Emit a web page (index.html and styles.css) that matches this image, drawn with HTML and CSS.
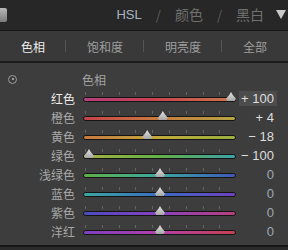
FILE: index.html
```html
<!DOCTYPE html>
<html lang="zh">
<head>
  <meta charset="UTF-8" />
  <title>HSL</title>
  <link rel="stylesheet" href="styles.css">
</head>
<body>
  <div class="panel">
    <div class="header">
      <div class="grip"></div>
      <div class="modes">
        <span class="mode active">HSL</span>
        <span class="slash">/</span>
        <span class="mode">颜色</span>
        <span class="slash">/</span>
        <span class="mode">黑白</span>
      </div>
      <div class="arrow"></div>
    </div>

    <div class="tabs">
      <span class="tab edge active">色相</span>
      <span class="sep"></span>
      <span class="tab">饱和度</span>
      <span class="sep"></span>
      <span class="tab">明亮度</span>
      <span class="sep"></span>
      <span class="tab edge">全部</span>
    </div>

    <div class="body">
      <div class="title-row">
        <span class="target"></span>
        <span class="title">色相</span>
      </div>

      <div class="row">
        <span class="label hot">红色</span>
        <div class="track red"><div class="rail"><span class="thumb" style="left: 100%"></span></div></div>
        <span class="value on">+ 100</span>
      </div>
      <div class="row">
        <span class="label">橙色</span>
        <div class="track orange"><div class="rail"><span class="thumb" style="left: 52%"></span></div></div>
        <span class="value">+ 4</span>
      </div>
      <div class="row">
        <span class="label">黄色</span>
        <div class="track yellow"><div class="rail"><span class="thumb" style="left: 41%"></span></div></div>
        <span class="value">− 18</span>
      </div>
      <div class="row">
        <span class="label">绿色</span>
        <div class="track green"><div class="rail"><span class="thumb" style="left: 0%"></span></div></div>
        <span class="value">− 100</span>
      </div>
      <div class="row">
        <span class="label">浅绿色</span>
        <div class="track aqua"><div class="rail"><span class="thumb" style="left: 50%"></span></div></div>
        <span class="value zero">0</span>
      </div>
      <div class="row">
        <span class="label">蓝色</span>
        <div class="track blue"><div class="rail"><span class="thumb" style="left: 50%"></span></div></div>
        <span class="value zero">0</span>
      </div>
      <div class="row">
        <span class="label">紫色</span>
        <div class="track purple"><div class="rail"><span class="thumb" style="left: 50%"></span></div></div>
        <span class="value zero">0</span>
      </div>
      <div class="row">
        <span class="label">洋红</span>
        <div class="track magenta"><div class="rail"><span class="thumb" style="left: 50%"></span></div></div>
        <span class="value zero">0</span>
      </div>
    </div>
    <div class="bottom"></div>
  </div>
</body>
</html>
```

FILE: styles.css
```css
* {
  box-sizing: border-box;
}

body {
  margin: 0;
  background: #3d3d3d;
  font-family: "Noto Sans CJK SC", "Liberation Sans", sans-serif;
}

.panel {
  width: 288px;
  height: 250px;
  display: flex;
  flex-direction: column;
  overflow: hidden;
}

.header {
  height: 31px;
  background: #272727;
  border-bottom: 1px solid #151515;
  display: flex;
  align-items: center;
}

.grip {
  width: 7px;
  height: 14px;
  margin-bottom: 1px;
  background: linear-gradient(#b8b8b8, #7a7a7a);
  border-radius: 0 2px 2px 0;
}

.modes {
  margin-left: auto;
  display: flex;
  align-items: center;
  gap: 9px;
  font-size: 14px;
  color: #6f6f6f;
  margin-bottom: 2px;
}

.mode.active {
  color: #a9b3c0;
  font-family: "Liberation Sans", sans-serif;
  font-size: 13px;
}

.slash {
  color: #5e5e5e;
  margin: 0 5px;
  font-size: 13px;
}

.arrow {
  width: 0;
  height: 0;
  margin: 0 2px 1px 12px;
  border-left: 5px solid transparent;
  border-right: 5px solid transparent;
  border-top: 9px solid #c9c9c9;
}

.tabs {
  height: 32px;
  background: #393939;
  border-bottom: 2px solid #1b1b1b;
  display: flex;
  align-items: center;
}

.tab {
  width: 78px;
  text-align: center;
  font-size: 12px;
  color: #9e9e9e;
}

.tab.edge {
  width: 66px;
}

.tab.active {
  color: #ececec;
}

.sep {
  width: 1px;
  height: 12px;
  margin-left: -1px;
  background: #555;
}

.body {
  flex: 1;
  display: flex;
  flex-direction: column;
  padding-top: 6px;
}

.title-row {
  height: 20px;
  display: flex;
  align-items: center;
}

.target {
  width: 9px;
  height: 9px;
  margin-left: 8px;
  border: 1px solid #9a9a9a;
  border-radius: 50%;
  display: flex;
  align-items: center;
  justify-content: center;
}

.target::after {
  content: "";
  width: 2px;
  height: 2px;
  border-radius: 50%;
  background: #bbb;
}

.title {
  margin-left: 65px;
  font-size: 12px;
  color: #a3a3a3;
}

.row {
  height: 19px;
  display: flex;
  align-items: center;
}

.label {
  width: 75px;
  text-align: right;
  font-size: 12px;
  color: #a8a8a8;
}

.label.hot {
  color: #ececec;
}

.track {
  position: relative;
  width: 153px;
  height: 5px;
  margin-left: 8px;
  margin-right: 1px;
  margin-top: 2px;
  border: 1px solid #141414;
  border-radius: 3px;
}

.track::before {
  content: "";
  position: absolute;
  left: 1px;
  right: 0;
  top: -6px;
  height: 3px;
  background: repeating-linear-gradient(90deg, #646464 0 1px, transparent 1px 16.8px);
}

.rail {
  position: absolute;
  left: 5px;
  right: 4px;
  top: 0;
  bottom: 0;
}

.thumb {
  position: absolute;
  top: -6px;
  width: 10px;
  height: 9px;
  margin-left: -5px;
  background: linear-gradient(#e4e4e4, #a6a6a6);
  clip-path: polygon(50% 0, 68% 32%, 100% 75%, 85% 100%, 15% 100%, 0 75%, 32% 32%);
}

.track.red { background: linear-gradient(90deg, #b5407e, #c84050 45%, #c9784a); }
.track.orange { background: linear-gradient(90deg, #c5424c, #c9783e 45%, #b6a440); }
.track.yellow { background: linear-gradient(90deg, #c87a40, #c2aa3c 50%, #98b040); }
.track.green { background: linear-gradient(90deg, #a8b040, #62b048 50%, #3ca2a8); }
.track.aqua { background: linear-gradient(90deg, #60ae48, #3ca8a0 50%, #4058b8); }
.track.blue { background: linear-gradient(90deg, #3aa8a0, #3a6cc0 50%, #7040c0); }
.track.purple { background: linear-gradient(90deg, #4a4cc0, #8a40c0 50%, #b8407c); }
.track.magenta { background: linear-gradient(90deg, #7c40c0, #b040a8 50%, #c44050); }

.value {
  width: 38px;
  margin-left: 2px;
  padding-right: 3px;
  text-align: right;
  font-family: "Liberation Sans", sans-serif;
  font-size: 13px;
  color: #dedede;
  line-height: 15px;
}

.value.on {
  background: #4c4c4c;
}

.value.zero {
  color: #9ea8b4;
}

.bottom {
  height: 5px;
  border-top: 2px solid #161616;
  background: #2b2b2b;
}
```
